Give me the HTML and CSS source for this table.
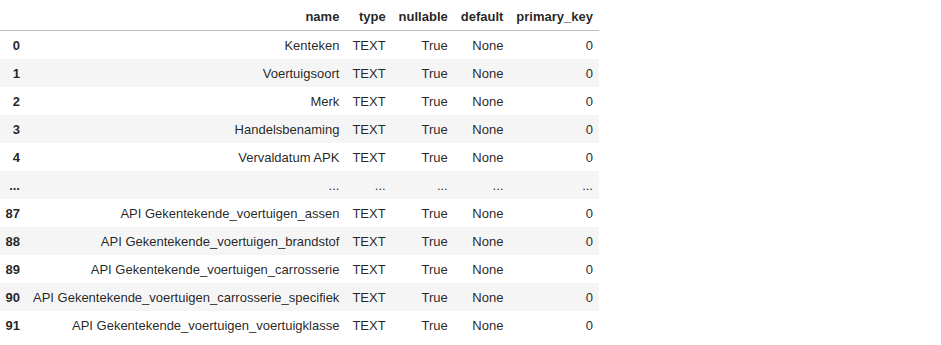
FILE: index.html
```html
<!DOCTYPE html>
<html>
<head>
<meta charset="utf-8">
<link rel="stylesheet" href="styles.css">
</head>
<body>
<div class="output">
<table class="dataframe">
  <thead>
    <tr>
      <th></th>
      <th>name</th>
      <th>type</th>
      <th>nullable</th>
      <th>default</th>
      <th>primary_key</th>
    </tr>
  </thead>
  <tbody>
    <tr><th>0</th><td>Kenteken</td><td>TEXT</td><td>True</td><td>None</td><td>0</td></tr>
    <tr><th>1</th><td>Voertuigsoort</td><td>TEXT</td><td>True</td><td>None</td><td>0</td></tr>
    <tr><th>2</th><td>Merk</td><td>TEXT</td><td>True</td><td>None</td><td>0</td></tr>
    <tr><th>3</th><td>Handelsbenaming</td><td>TEXT</td><td>True</td><td>None</td><td>0</td></tr>
    <tr><th>4</th><td>Vervaldatum APK</td><td>TEXT</td><td>True</td><td>None</td><td>0</td></tr>
    <tr><th>...</th><td>...</td><td>...</td><td>...</td><td>...</td><td>...</td></tr>
    <tr><th>87</th><td>API Gekentekende_voertuigen_assen</td><td>TEXT</td><td>True</td><td>None</td><td>0</td></tr>
    <tr><th>88</th><td>API Gekentekende_voertuigen_brandstof</td><td>TEXT</td><td>True</td><td>None</td><td>0</td></tr>
    <tr><th>89</th><td>API Gekentekende_voertuigen_carrosserie</td><td>TEXT</td><td>True</td><td>None</td><td>0</td></tr>
    <tr><th>90</th><td>API Gekentekende_voertuigen_carrosserie_specifiek</td><td>TEXT</td><td>True</td><td>None</td><td>0</td></tr>
    <tr><th>91</th><td>API Gekentekende_voertuigen_voertuigklasse</td><td>TEXT</td><td>True</td><td>None</td><td>0</td></tr>
  </tbody>
</table>
</div>
</body>
</html>
```
FILE: styles.css
```css
html, body {
  margin: 0;
  padding: 0;
  background: #ffffff;
}

.output {
  padding-top: 2px;
  margin-left: -1px;
}

.dataframe {
  border-collapse: collapse;
  border-spacing: 0;
  border: none;
  font-family: "Liberation Sans", Arial, sans-serif;
  font-size: 13px;
  color: rgba(0, 0, 0, 0.87);
}

.dataframe thead {
  border-bottom: 1px solid #bdbdbd;
}

.dataframe th,
.dataframe td {
  text-align: right;
  vertical-align: middle;
  padding: 0.5em 0.5em;
  line-height: normal;
  white-space: nowrap;
  border: none;
}

.dataframe th {
  font-weight: bold;
}

.dataframe tbody tr:nth-child(odd) {
  background: #ffffff;
}

.dataframe tbody tr:nth-child(even) {
  background: #f5f5f5;
}
```
